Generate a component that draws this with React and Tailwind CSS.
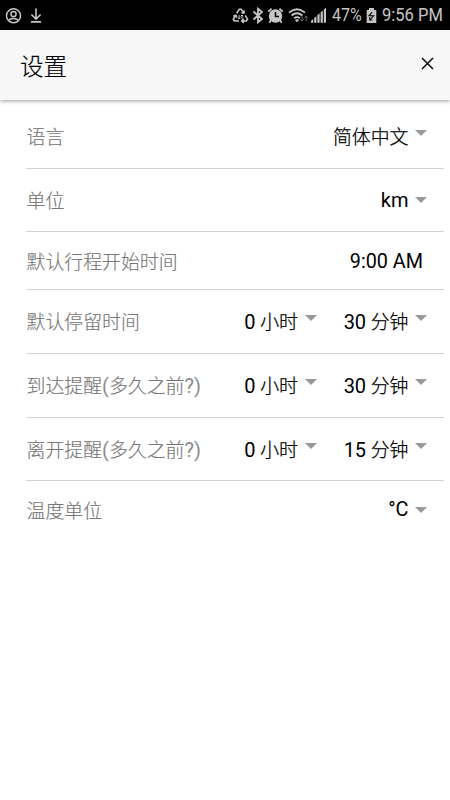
import React from "react";

function StatusBar() {
  return (
    <div className="flex h-[30px] items-center bg-black pl-[5px] pr-[7px] text-[#c6c6c6]">
      <svg width="17" height="17" viewBox="0 0 17 17" fill="none" stroke="currentColor" strokeWidth="1.5">
        <path d="M3 13.2A7 7 0 1 1 14 13.2" />
        <circle cx="8.5" cy="7" r="2.6" />
        <path d="M3.6 13.8C4.8 10.8 12.2 10.8 13.4 13.8C10.8 16.4 6.2 16.4 3.6 13.8Z" />
      </svg>
      <svg className="ml-[8px]" width="12" height="17" viewBox="0 0 12 17" fill="none" stroke="currentColor" strokeWidth="1.6">
        <path d="M6 1.5V12M1.4 7.5L6 12.1L10.6 7.5M1 14.9H11" />
      </svg>
      <div className="flex-1" />
      <svg width="17" height="17" viewBox="0 0 17 17" fill="none" stroke="currentColor" strokeWidth="1.6">
        <path d="M4.7 6.3L7.3 2.2H9.2L11.6 6.2M9.4 6H12V3.5M13.2 8.4L15.5 12.2L14.4 14H10.2M11.8 11.8L9.7 14L11.8 16M7 14H2.3L1.3 12.3L3.6 8.4M1.3 9.2L3.9 8.2L4.8 10.6" />
        <path strokeWidth="1" d="M7.1 8V12M5.8 10.7L7.1 12L8.4 10.7M10 12V8M8.7 9.3L10 8L11.3 9.3" />
      </svg>
      <svg className="ml-[3px]" width="12" height="17" viewBox="0 0 12 17" fill="none" stroke="currentColor" strokeWidth="1.8">
        <path d="M1.5 4.5L10 12L6 15.3V1.7L10 5L1.5 12.5" />
      </svg>
      <svg className="ml-[3px]" width="17" height="17" viewBox="0 0 17 17">
        <circle cx="8.5" cy="9" r="6.7" fill="currentColor" />
        <path d="M1.2 4.7L4.6 1.6M15.8 4.7L12.4 1.6M3.8 13.3L2.4 15.8M13.2 13.3L14.6 15.8" stroke="currentColor" strokeWidth="1.8" />
        <path d="M8.5 5V9.4H12" fill="none" stroke="#000" strokeWidth="1.5" />
      </svg>
      <svg className="ml-[4px]" width="21" height="17" viewBox="0 0 21 17" fill="none">
        <path d="M1 5.6Q9 -1 17 5.6M3.6 8.5Q9 4 14.4 8.5M6.2 11.3Q9 9 11.8 11.3" stroke="currentColor" strokeWidth="1.8" />
        <path d="M6.9 12.9Q9 11.5 11.1 12.9L9 15.2Z" fill="currentColor" />
        <path d="M14 9V14M12.3 12.3L14 14L15.7 12.3M18.2 14V9M16.5 10.7L18.2 9L19.9 10.7" stroke="#666" strokeWidth="1" />
      </svg>
      <svg className="ml-[2px]" width="16" height="17" viewBox="0 0 16 17" fill="currentColor">
        <path d="M0 14L2.2 12V15.8H0ZM3.2 11L5.4 9.2V15.8H3.2ZM6.4 8.2L8.6 6.2V15.8H6.4ZM9.6 5.4L11.8 3.4V15.8H9.6ZM12.8 2.6L15 0.8V15.8H12.8Z" />
      </svg>
      <span className="ml-[5px] w-[31px] whitespace-nowrap text-[18px] leading-[30px]">
        <span className="inline-block origin-left scale-x-[0.89]">47%</span>
      </span>
      <svg className="ml-[3px]" width="11" height="17" viewBox="0 0 11 17">
        <path d="M3 1H8V3H10.3V16H0.7V3H3Z" fill="currentColor" />
        <path d="M6.2 5L3 8.8H7.6L3.8 13M3.7 10.2V13H6.5" fill="none" stroke="#000" strokeWidth="1.1" />
      </svg>
      <span className="ml-[5px] w-[61px] whitespace-nowrap text-[18px] leading-[30px]">
        <span className="inline-block origin-left scale-x-[0.92]">9:56 PM</span>
      </span>
    </div>
  );
}

function Caret({ className }) {
  return (
    <svg className={className} width="12" height="6" viewBox="0 0 12 6">
      <path d="M0 0H12L6 6Z" fill="#999" />
    </svg>
  );
}

function Select({ value, low, wide }) {
  return (
    <div className="flex items-center">
      <span className={low ? "" : "pt-[2px]"}>{value}</span>
      <Caret className={`${wide ? "ml-[7px]" : "ml-[6.5px]"} ${low ? "mb-px" : "mb-[7px]"}`} />
    </div>
  );
}

function Row({ label, note, size, last, children }) {
  return (
    <div className={`ml-[26px] mr-[6px] flex items-center justify-between pr-[17px] ${size} ${last ? "" : "border-b border-[#d3d3d3]"}`}>
      <span className={`whitespace-nowrap pl-[0.5px] font-light text-[#777] [-webkit-text-stroke:0.15px_#777] ${note ? "pt-[2px]" : "pt-[3px]"}`}>
        {label}
        {note && (
          <>
            <span className="text-[20px] font-normal text-[#8c8c8c] [-webkit-text-stroke:0]">(</span>
            {note}
            <span className="text-[20px] font-normal text-[#8c8c8c] [-webkit-text-stroke:0]">?)</span>
          </>
        )}
      </span>
      <div className="flex items-center text-black">{children}</div>
    </div>
  );
}

function Amount({ number, unit }) {
  return (
    <>
      <span className="text-[20px]">{number}</span>
      <span className="font-light [-webkit-text-stroke:0.25px_#000]"> {unit}</span>
    </>
  );
}

function Duration({ hours = "0", minutes }) {
  return (
    <div className="flex">
      <Select wide value={<Amount number={hours} unit="小时" />} />
      <div className="flex w-[110px] justify-end">
        <Select value={<Amount number={minutes} unit="分钟" />} />
      </div>
    </div>
  );
}

export default function App() {
  return (
    <div className="flex h-[800px] w-[450px] flex-col overflow-hidden bg-white font-['Roboto','Noto_Sans_CJK_SC',sans-serif]">
      <StatusBar />
      <header className="flex h-[70px] shrink-0 items-center justify-between bg-[#f7f7f7] pl-[20px] pr-[16px] shadow-[0_1px_4px_rgba(0,0,0,0.4)]">
        <h1 className="pt-[5px] text-[23.5px] font-light leading-none text-black [-webkit-text-stroke:0.2px_#000]">设置</h1>
        <svg className="mb-[3px]" width="13" height="13" viewBox="0 0 13 13" stroke="#111" strokeWidth="1.6">
          <path d="M1 1L12 12M12 1L1 12" />
        </svg>
      </header>
      <main className="pt-[5px] text-[18.9px] leading-6">
        <Row label="语言" size="h-[64px]">
          <Select value={<span className="font-light [-webkit-text-stroke:0.25px_#000]">简体中文</span>} />
        </Row>
        <Row label="单位" size="h-[63px]">
          <Select value={<span className="text-[20px]">km</span>} low />
        </Row>
        <Row label="默认行程开始时间" size="h-[58px] pt-px">
          <span className="mr-[4px] pt-px text-[19.8px]">9:00 AM</span>
        </Row>
        <Row label="默认停留时间" size="h-[64px]"><Duration minutes="30" /></Row>
        <Row label="到达提醒" note="多久之前" size="h-[64px]"><Duration minutes="30" /></Row>
        <Row label="离开提醒" note="多久之前" size="h-[63px]"><Duration minutes="15" /></Row>
        <Row label="温度单位" size="h-[58px]" last>
          <Select value={<span className="text-[19.8px]">°C</span>} low />
        </Row>
      </main>
    </div>
  );
}
